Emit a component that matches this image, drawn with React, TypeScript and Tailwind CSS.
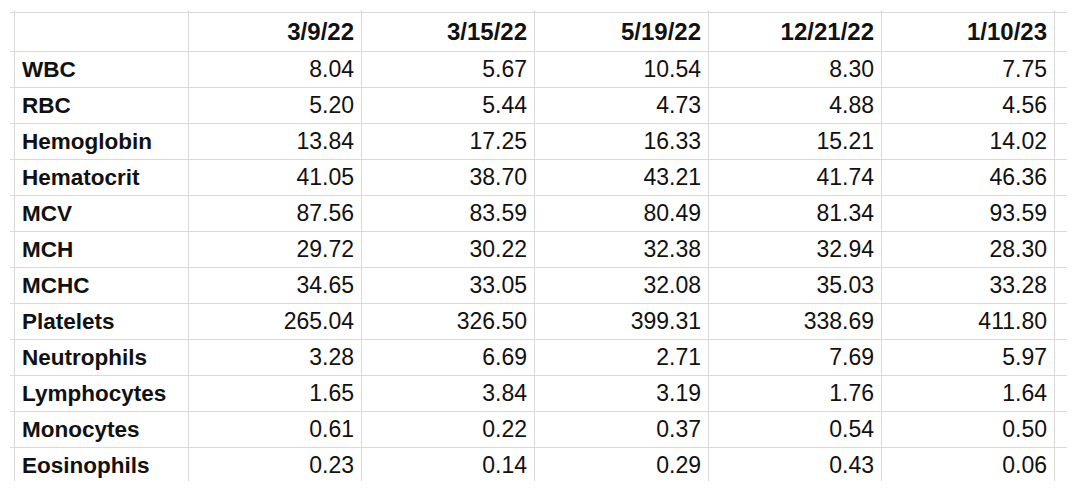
import React from "react";

const dates = ["3/9/22", "3/15/22", "5/19/22", "12/21/22", "1/10/23"];
const rows: [string, string[]][] = [
  ["WBC", ["8.04", "5.67", "10.54", "8.30", "7.75"]],
  ["RBC", ["5.20", "5.44", "4.73", "4.88", "4.56"]],
  ["Hemoglobin", ["13.84", "17.25", "16.33", "15.21", "14.02"]],
  ["Hematocrit", ["41.05", "38.70", "43.21", "41.74", "46.36"]],
  ["MCV", ["87.56", "83.59", "80.49", "81.34", "93.59"]],
  ["MCH", ["29.72", "30.22", "32.38", "32.94", "28.30"]],
  ["MCHC", ["34.65", "33.05", "32.08", "35.03", "33.28"]],
  ["Platelets", ["265.04", "326.50", "399.31", "338.69", "411.80"]],
  ["Neutrophils", ["3.28", "6.69", "2.71", "7.69", "5.97"]],
  ["Lymphocytes", ["1.65", "3.84", "3.19", "1.76", "1.64"]],
  ["Monocytes", ["0.61", "0.22", "0.37", "0.54", "0.50"]],
  ["Eosinophils", ["0.23", "0.14", "0.29", "0.43", "0.06"]],
];

const widths = ["w-[174px]", "w-[173px]", "w-[173px]", "w-[174px]", "w-[173px]", "w-[174px]"];

function Row({
  label,
  values,
  header,
  height,
  topBorder,
}: {
  label: string;
  values: string[];
  header?: boolean;
  height: string;
  topBorder: boolean;
}) {
  return (
    <div className={`flex shrink-0 ${height} ${topBorder ? "border-t border-[#d9d9d9]" : ""}`}>
      <div className="w-[4px] shrink-0" />
      <div
        className={`${widths[0]} shrink-0 border-l border-[#d9d9d9] pl-[7px] flex items-center font-bold text-[22.5px] text-[#111111]`}
      >
        {label}
      </div>
      {values.map((v, i) => (
        <div
          key={i}
          className={`${widths[i + 1]} shrink-0 border-l border-[#d9d9d9] ${
            i === values.length - 1 ? "border-r" : ""
          } pr-[7px] flex items-center justify-end text-[#111111] ${
            header ? "font-bold text-[24px]" : "text-[23px]"
          }`}
        >
          {v}
        </div>
      ))}
    </div>
  );
}

export default function App() {
  return (
    <div
      className="w-[1080px] h-[491px] bg-white overflow-hidden"
      style={{ fontFamily: '"Liberation Sans", Arial, sans-serif' }}
    >
      <div className="ml-[10px] mt-[10px] w-[1057px] h-[471px] overflow-hidden flex flex-col">
        <Row label="" values={["", "", "", "", ""]} height="h-[2px]" topBorder={false} />
        <Row label="" values={dates} header height="h-[39px]" topBorder />
        {rows.map(([l, v]) => (
          <Row key={l} label={l} values={v} height="h-[36px]" topBorder />
        ))}
      </div>
    </div>
  );
}
